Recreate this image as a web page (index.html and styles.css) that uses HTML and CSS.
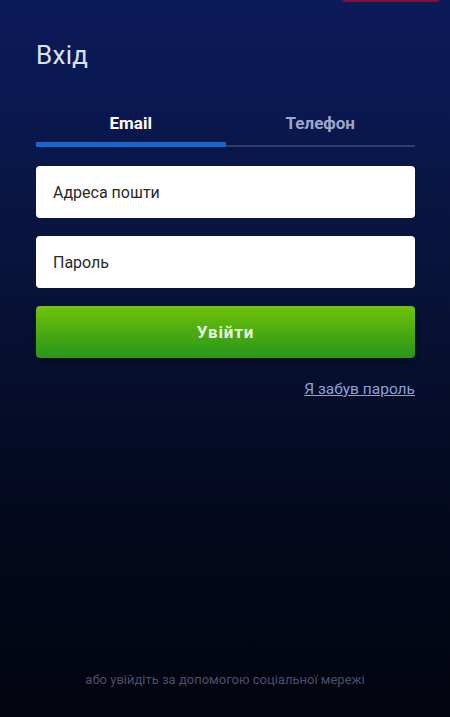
FILE: index.html
```html
<!DOCTYPE html>
<html lang="uk">
<head>
<meta charset="utf-8">
<link rel="stylesheet" href="styles.css">
</head>
<body>
<div class="page">
  <div class="topbar"><div class="top-btn"></div></div>
  <main class="content">
    <h1 class="title">Вхід</h1>
    <div class="tabs">
      <div class="tab active">Email</div>
      <div class="tab">Телефон</div>
    </div>
    <form class="form">
      <div class="field">Адреса пошти</div>
      <div class="field">Пароль</div>
      <button type="button" class="submit">Увійти</button>
    </form>
    <div class="forgot-row"><a class="forgot" href="#">Я забув пароль</a></div>
  </main>
  <footer class="social">або увійдіть за допомогою соціальної мережі</footer>
</div>
</body>
</html>
```
FILE: styles.css
```css
* { box-sizing: border-box; }
html, body { margin: 0; padding: 0; }
body {
  font-family: Roboto, "Noto Sans", sans-serif;
  background: #03050f;
}
.page {
  width: 450px;
  height: 717px;
  display: flex;
  flex-direction: column;
  background: linear-gradient(180deg, #0b1a58 0%, #0a1850 15%, #071337 40%, #040a22 65%, #02040e 100%);
  overflow: hidden;
}
.topbar {
  height: 0;
  position: relative;
}
.top-btn {
  position: absolute;
  left: 341px;
  top: -30px;
  width: 100px;
  height: 32px;
  border: 2px solid #7a1240;
  border-radius: 5px;
}
.content {
  padding: 40px 35px 0 36px;
  flex: 1;
}
.title {
  margin: 0;
  font-weight: 400;
  font-size: 26px;
  line-height: 30px;
  color: #dde2f2;
  letter-spacing: 0.3px;
}
.tabs {
  display: flex;
  margin-top: 42px;
  border-bottom: 2px solid #2e3c6e;
}
.tab {
  flex: 1;
  text-align: center;
  font-size: 17px;
  font-weight: 700;
  color: #9ea6c8;
  padding-bottom: 8px;
  line-height: 22px;
  margin-bottom: -2px;
  border-bottom: 5px solid transparent;
}
.tab.active {
  color: #ffffff;
  border-bottom-color: #1f63c4;
  border-radius: 3px 3px 0 0;
}
.form {
  display: flex;
  flex-direction: column;
  gap: 18px;
  margin-top: 19px;
}
.field {
  height: 52px;
  background: #fff;
  border-radius: 4px;
  padding: 0 17px;
  display: flex;
  align-items: center;
  font-size: 16px;
  color: #2a2a2a;
}
.submit {
  height: 52px;
  border: 0;
  border-radius: 4px;
  background: linear-gradient(180deg, #72c30a 0%, #4aab12 50%, #28951c 100%);
  color: #e9f3e2;
  font-family: inherit;
  font-size: 17px;
  font-weight: 700;
  letter-spacing: 0.8px;
  box-shadow: 0 2px 4px rgba(0,0,0,0.4);
}
.forgot-row {
  display: flex;
  justify-content: flex-end;
  margin-top: 21px;
}
.forgot {
  color: #8aa2dc;
  font-size: 15.5px;
  line-height: 20px;
  text-decoration: underline;
}
.social {
  text-align: center;
  font-size: 13px;
  color: #4a4f6c;
  padding-bottom: 30px;
}
```
